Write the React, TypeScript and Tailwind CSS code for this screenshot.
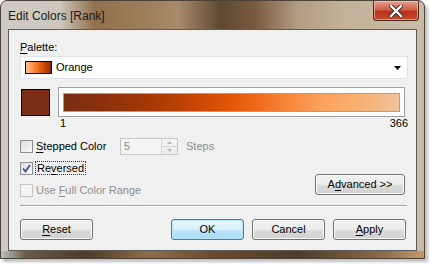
import React from "react"

const font = "font-['Segoe_UI','Liberation_Sans',Arial,sans-serif]"

function Check({ checked = false, disabled = false }: { checked?: boolean; disabled?: boolean }) {
  return (
    <span
      className={`flex h-[13px] w-[13px] shrink-0 items-center justify-center border ${
        disabled ? "border-[#c6c6c6] bg-[#f4f4f4]" : "border-[#8e8f8f] bg-[linear-gradient(135deg,#dcdcdc,#fbfbfb)]"
      }`}
    >
      {checked && (
        <svg width="9" height="9" viewBox="0 0 9 9">
          <path d="M1 4.5 L3.5 7.5 L8 1" fill="none" stroke="#3a5694" strokeWidth="1.8" />
        </svg>
      )}
    </span>
  )
}

function Btn({ children, primary = false, className = "" }: { children: React.ReactNode; primary?: boolean; className?: string }) {
  return (
    <div
      className={`flex items-center justify-center rounded-[3px] border text-[11px] text-black ${
        primary
          ? "border-[#3c7fb1] bg-[linear-gradient(#eaf6fd_0%,#d9f0fc_50%,#bee6fd_51%,#a7d9f5_100%)] shadow-[inset_0_0_0_1px_#b6e4fb]"
          : "border-[#707070] bg-[linear-gradient(#f2f2f2_0%,#ebebeb_50%,#dddddd_51%,#cfcfcf_100%)] shadow-[inset_0_0_0_1px_#fbfbfb]"
      } ${className}`}
    >
      {children}
    </div>
  )
}

export default function App() {
  return (
    <div className={`h-[264px] w-[430px] overflow-hidden bg-white ${font}`}>
      <div className="flex h-[259px] w-[425px] flex-col rounded-t-[7px] border border-[#4a4238] bg-[linear-gradient(90deg,#cfcbc4_0%,#cdc7be_14%,#93704c_22%,#9c7b57_32%,#a88a68_42%,#5e4833_52%,#7a5a3d_60%,#b29c83_70%,#c4b29a_82%,#c9bca6_100%)] shadow-[3px_3px_3px_rgba(0,0,0,0.25)]">
        {/* title bar */}
        <div className="flex h-[28px] items-start justify-between">
          <span className="pl-[7px] pt-[8px] text-[12px] leading-[14px] text-[#1a1a1a]">Edit Colors [Rank]</span>
          <div className="mr-[5px] flex h-[20px] w-[46px] items-center justify-center rounded-b-[4px] border border-t-0 border-[#4a2a20] bg-[linear-gradient(#e7a391_0%,#d0614b_45%,#b8341c_55%,#c8472c_100%)] shadow-[inset_0_0_0_1px_rgba(255,220,210,0.5)]">
            <svg width="14" height="12" viewBox="0 0 14 12">
              <path d="M2 1 L12 11 M12 1 L2 11" stroke="#3a2a2a" strokeWidth="4.2" strokeLinecap="round" />
              <path d="M2 1 L12 11 M12 1 L2 11" stroke="#ffffff" strokeWidth="2.4" strokeLinecap="round" />
            </svg>
          </div>
        </div>

        {/* client */}
        <div className="mx-[7px] flex h-[222px] flex-col border border-[#5c5c5c] bg-[#f0f0f0] px-[11px] text-[11px] text-black">
          <div className="mt-[10px] leading-[14px]">
            <span className="underline underline-offset-2">P</span>alette:
          </div>
          <div className="mt-[2px] flex h-[23px] w-[388px] items-center border border-[#e2e3ea] bg-white pl-[4px] pr-[6px]">
            <span className="h-[13px] w-[27px] border border-black bg-[linear-gradient(90deg,#fdc08e,#f67d29_40%,#d14a06_70%,#8a2e0b)]" />
            <span className="ml-[4px] flex-1">Orange</span>
            <svg width="7" height="4" viewBox="0 0 7 4">
              <path d="M0 0 H7 L3.5 4 Z" fill="#000" />
            </svg>
          </div>

          <div className="mt-[8px] flex items-center">
            <span className="ml-[1px] h-[27px] w-[29px] border border-black bg-[#7c2d15]" />
            <div className="ml-[8px] flex h-[30px] w-[349px] items-center justify-center border border-[#a0a0a0] bg-white">
              <div className="h-[19px] w-[337px] border border-[#a0a0a0] bg-[linear-gradient(90deg,#7a2e12_0%,#8a300c_11%,#a33804_25%,#cb4604_40%,#e05508_49%,#f06a1c_58%,#f8883a_67%,#f9a15a_76%,#f9ad6c_85%,#f6b882_94%,#efc59e_100%)]" />
            </div>
          </div>
          <div className="ml-[40px] flex w-[348px] justify-between leading-[13px]">
            <span>1</span>
            <span>366</span>
          </div>

          <div className="mt-[8px] flex items-center">
            <Check />
            <span className="ml-[3px] w-[84px]">
              <span className="underline underline-offset-2">S</span>tepped Color
            </span>
            <div className="flex h-[17px] w-[58px] items-center border border-[#c5c5c5] bg-[#f4f4f4]">
              <span className="ml-[3px] flex-1 text-[#8d8d8d]">5</span>
              <div className="flex h-full w-[16px] flex-col border-l border-[#d6d6d6]">
                <div className="flex flex-1 items-center justify-center border-b border-[#d6d6d6] bg-[#f4f4f4]">
                  <svg width="5" height="3" viewBox="0 0 5 3"><path d="M0 3 H5 L2.5 0 Z" fill="#b9b9b9" /></svg>
                </div>
                <div className="flex flex-1 items-center justify-center bg-[#eeeeee]">
                  <svg width="5" height="3" viewBox="0 0 5 3"><path d="M0 0 H5 L2.5 3 Z" fill="#b9b9b9" /></svg>
                </div>
              </div>
            </div>
            <span className="ml-[8px] text-[#8d8d8d]">Steps</span>
          </div>

          <div className="flex items-end justify-between">
            <div className="flex flex-col">
              <div className="mt-[6px] flex items-center">
                <Check checked />
                <span className="ml-[2px] border border-dotted border-[#333] px-[1px] leading-[12px]">
                  Re<span className="underline underline-offset-2">v</span>ersed
                </span>
              </div>
              <div className="mt-[7px] flex items-center text-[#8d8d8d]">
                <Check disabled />
                <span className="ml-[3px]">
                  Use <span className="underline underline-offset-2">F</span>ull Color Range
                </span>
              </div>
            </div>
            <Btn className="mb-[4px] h-[21px] w-[90px]">
              <span>
                A<span className="underline underline-offset-2">d</span>vanced &gt;&gt;
              </span>
            </Btn>
          </div>

          <div className="mt-[6px] h-[2px] w-[387px] border-t border-[#a0a0a0] border-b-white border-b" />

          <div className="mt-[12px] flex w-[386px] items-center justify-between">
            <Btn className="h-[21px] w-[73px]">
              <span>
                <span className="underline underline-offset-2">R</span>eset
              </span>
            </Btn>
            <div className="flex gap-[8px]">
              <Btn primary className="h-[21px] w-[73px]">OK</Btn>
              <Btn className="h-[21px] w-[73px]">Cancel</Btn>
              <Btn className="h-[21px] w-[73px]">
                <span>
                  <span className="underline underline-offset-2">A</span>pply
                </span>
              </Btn>
            </div>
          </div>
        </div>
        <div className="mx-[0px] flex-1 bg-[linear-gradient(90deg,#b9c4bb_0%,#6a5a45_6%,#4e3a28_20%,#8f6e4a_35%,#6b4a30_50%,#4f3a28_70%,#8a6a48_90%,#c59a6a_100%)]" />
      </div>
    </div>
  )
}
